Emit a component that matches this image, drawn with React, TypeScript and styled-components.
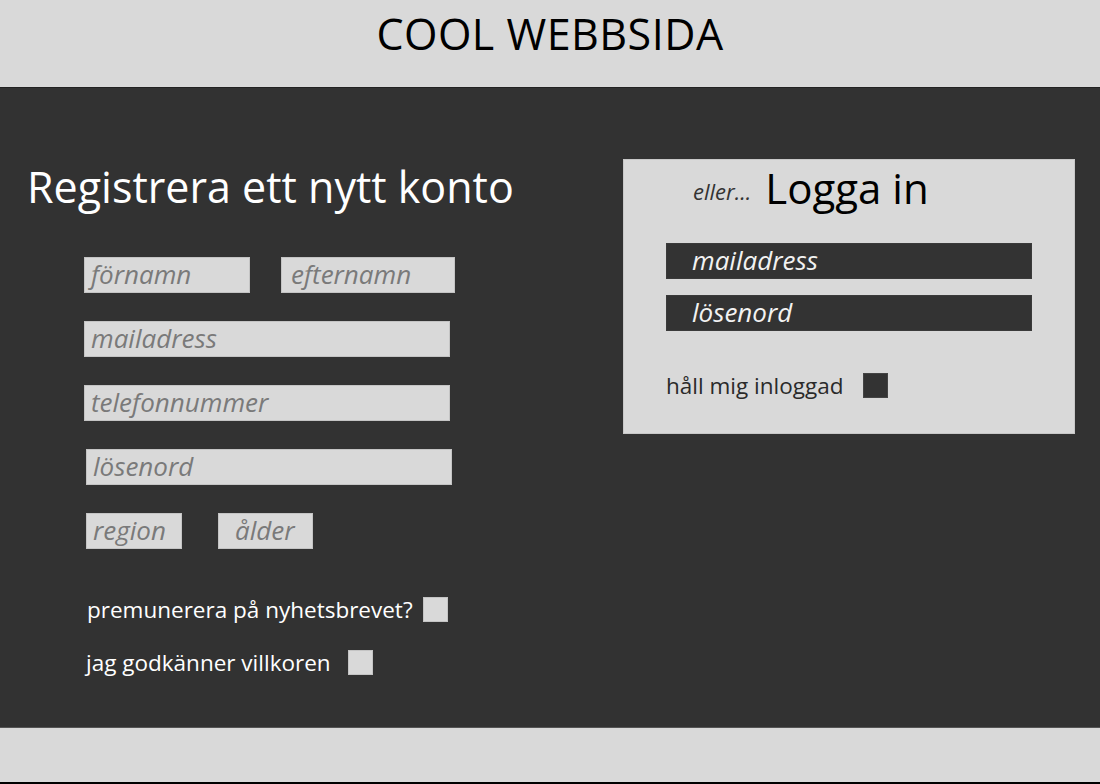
import React from "react";
import styled, { createGlobalStyle } from "styled-components";

const Global = createGlobalStyle`
  html, body { margin: 0; padding: 0; }
  body {
    background: #323232;
    font-family: "Open Sans", "Noto Sans", sans-serif;
  }
  * { box-sizing: border-box; }
`;

const Page = styled.div`
  width: 1100px;
  height: 784px;
  display: flex;
  flex-direction: column;
  overflow: hidden;
`;

const Header = styled.header`
  height: 88px;
  background: #d9d9d9;
  border-bottom: 1px solid #222;
  display: flex;
  justify-content: center;
  align-items: flex-start;
  padding-top: 4px;
`;

const SiteTitle = styled.h1`
  margin: 0;
  font-size: 43px;
  font-weight: 400;
  color: #000;
  letter-spacing: 0.5px;
`;

const Main = styled.main`
  flex: 1;
  background: #323232;
  display: flex;
  justify-content: space-between;
  align-items: flex-start;
  padding: 0 25px 0 27px;
`;

const RegisterColumn = styled.section`
  display: flex;
  flex-direction: column;
  padding-top: 71px;
`;

const Heading = styled.h2<{ $dark?: boolean }>`
  margin: 0;
  font-size: 43px;
  line-height: 56px;
  font-weight: 400;
  color: ${(p) => (p.$dark ? "#000" : "#fff")};
`;

const Fields = styled.div`
  display: flex;
  flex-direction: column;
  gap: 28px;
  margin-top: 42px;
  padding-left: 57px;
`;

const FieldRow = styled.div<{ $gap?: number; $shift?: number }>`
  display: flex;
  gap: ${(p) => p.$gap ?? 0}px;
  margin-left: ${(p) => p.$shift ?? 0}px;
`;

const Field = styled.div<{ $w: number; $pad?: number; $dark?: boolean }>`
  width: ${(p) => p.$w}px;
  height: 36px;
  background: ${(p) => (p.$dark ? "#333" : "#d9d9d9")};
  border: 1px solid ${(p) => (p.$dark ? "#3a3a3a" : "#c4c4c4")};
  color: ${(p) => (p.$dark ? "#f2f2f2" : "#7a7a7a")};
  font-style: italic;
  font-size: 26px;
  line-height: 33px;
  padding-left: ${(p) => p.$pad ?? 6}px;
  white-space: nowrap;
  overflow: hidden;
`;

const Checks = styled.div`
  display: flex;
  flex-direction: column;
  gap: 28px;
  margin-top: 48px;
  padding-left: 59px;
`;

const CheckRow = styled.label<{ $gap: number; $shift?: number; $dark?: boolean }>`
  display: flex;
  align-items: center;
  gap: ${(p) => p.$gap}px;
  margin-left: ${(p) => p.$shift ?? 0}px;
  font-size: 22.5px;
  line-height: 25px;
  color: ${(p) => (p.$dark ? "#2a2a2a" : "#fff")};
`;

const Box = styled.span<{ $dark?: boolean }>`
  width: 25px;
  height: 25px;
  display: inline-block;
  flex-shrink: 0;
  background: ${(p) => (p.$dark ? "#333" : "#d9d9d9")};
  border: 1px solid ${(p) => (p.$dark ? "#444" : "#c4c4c4")};
`;

const LoginPanel = styled.section`
  margin-top: 71px;
  width: 452px;
  height: 275px;
  background: #d9d9d9;
  border: 1px solid #c8c8c8;
  display: flex;
  flex-direction: column;
  padding: 0 42px 0 42px;
`;

const LoginHead = styled.div`
  display: flex;
  align-items: flex-end;
  gap: 14px;
  padding-left: 27px;
`;

const Eller = styled.span`
  font-size: 22px;
  line-height: 30px;
  font-style: italic;
  color: #333;
  padding-bottom: 10px;
`;

const LoginTitle = styled(Heading)`
  font-size: 42px;
`;

const LoginFields = styled.div`
  display: flex;
  flex-direction: column;
  gap: 16px;
  margin-top: 27px;
`;

const LoginChecks = styled.div`
  margin-top: 42px;
`;

const Footer = styled.footer`
  height: 57px;
  background: #d9d9d9;
  border-top: 1px solid #555;
  border-bottom: 2px solid #000;
`;

export default function App() {
  return (
    <Page>
      <Global />
      <Header>
        <SiteTitle>COOL WEBBSIDA</SiteTitle>
      </Header>
      <Main>
        <RegisterColumn>
          <Heading>Registrera ett nytt konto</Heading>
          <Fields>
            <FieldRow $gap={31}>
              <Field $w={166}>förnamn</Field>
              <Field $w={174} $pad={9}>efternamn</Field>
            </FieldRow>
            <FieldRow>
              <Field $w={366}>mailadress</Field>
            </FieldRow>
            <FieldRow>
              <Field $w={366}>telefonnummer</Field>
            </FieldRow>
            <FieldRow $shift={2}>
              <Field $w={366}>lösenord</Field>
            </FieldRow>
            <FieldRow $gap={36} $shift={2}>
              <Field $w={96}>region</Field>
              <Field $w={95} $pad={16}>ålder</Field>
            </FieldRow>
          </Fields>
          <Checks>
            <CheckRow $gap={10} $shift={1}>
              premunerera på nyhetsbrevet?
              <Box />
            </CheckRow>
            <CheckRow $gap={17}>
              jag godkänner villkoren
              <Box />
            </CheckRow>
          </Checks>
        </RegisterColumn>
        <LoginPanel>
          <LoginHead>
            <Eller>eller...</Eller>
            <LoginTitle $dark>Logga in</LoginTitle>
          </LoginHead>
          <LoginFields>
            <Field $w={366} $pad={25} $dark>mailadress</Field>
            <Field $w={366} $pad={25} $dark>lösenord</Field>
          </LoginFields>
          <LoginChecks>
            <CheckRow $gap={20} $dark>
              håll mig inloggad
              <Box $dark />
            </CheckRow>
          </LoginChecks>
        </LoginPanel>
      </Main>
      <Footer />
    </Page>
  );
}
